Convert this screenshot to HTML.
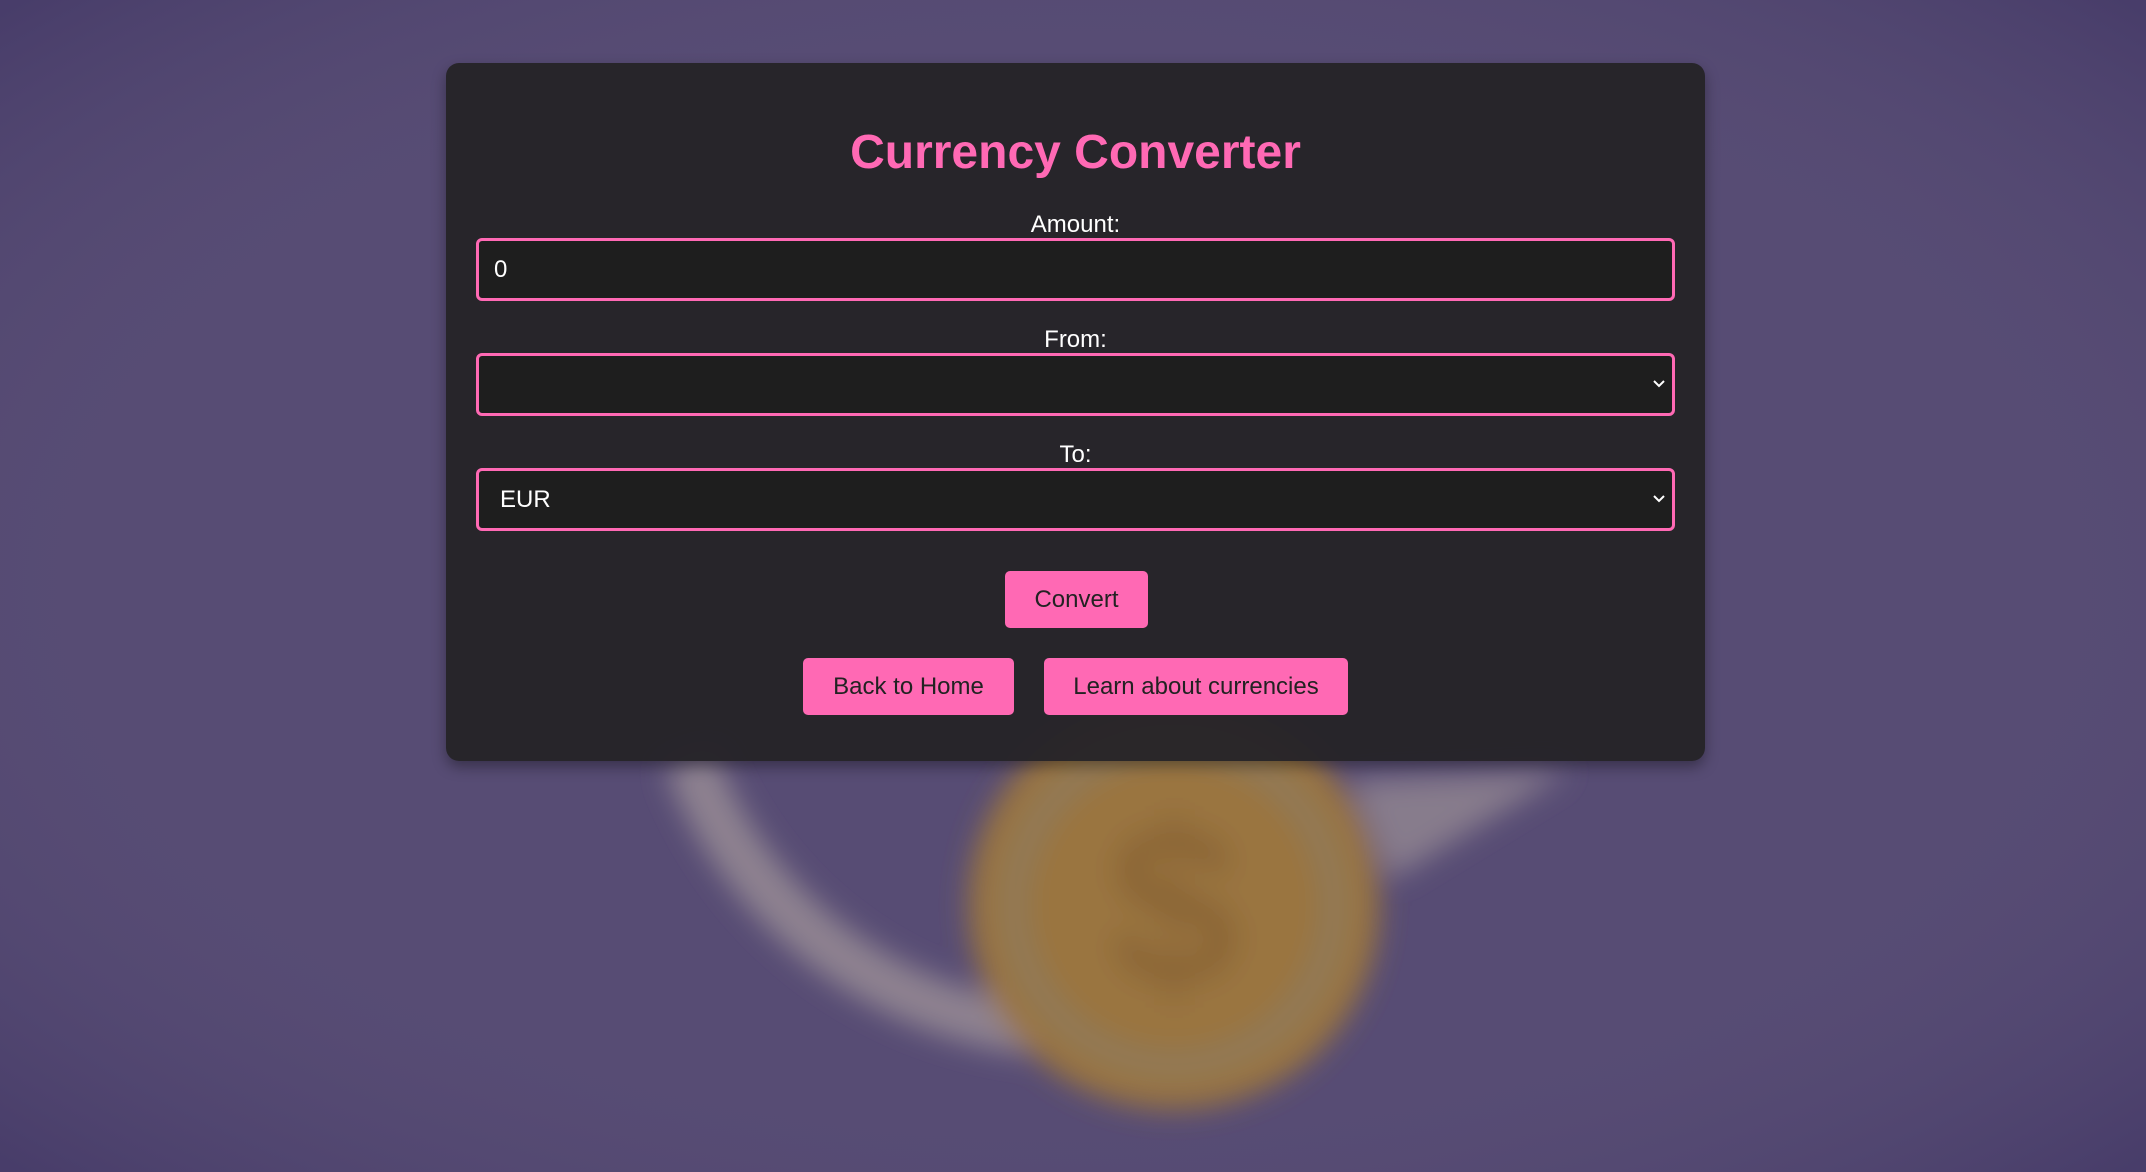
<!DOCTYPE html>
<html><head><meta charset="utf-8"><style>
html,body{margin:0;padding:0;width:2146px;height:1172px;overflow:hidden;background:#564a74;font-family:"Liberation Sans",Arial,sans-serif;}
.bg{position:absolute;left:0;top:0;width:2146px;height:1172px;}
.card{position:absolute;left:446px;top:63px;width:1259px;height:698px;background:rgba(37,35,40,0.96);border-radius:13px;box-shadow:0 6px 14px rgba(0,0,0,0.35);box-sizing:border-box;padding:0 30px;}
h1{margin:0;position:absolute;left:0;right:0;top:62px;text-align:center;color:#ff69b4;font-size:48px;font-weight:bold;line-height:56px;}
.lbl{position:absolute;left:0;right:0;text-align:center;color:#fff;font-size:24px;line-height:28px;}
.fld{position:absolute;left:30px;width:1199px;height:63px;box-sizing:border-box;border:3px solid #ff69b4;border-radius:6px;background:#1e1e1e;color:#fff;font-size:24px;line-height:58px;}
.chev{position:absolute;right:6px;top:0;width:14px;height:57px;}
.btn{position:absolute;background:#ff69b4;color:#222;font-size:24px;text-align:center;line-height:57px;height:57px;border-radius:5px;}
</style></head><body>
<svg class="bg" viewBox="0 0 2146 1172">
<defs>
<filter id="b" x="-50%" y="-50%" width="200%" height="200%"><feGaussianBlur stdDeviation="14"/></filter>
<radialGradient id="v" cx="50%" cy="50%" r="70%"><stop offset="60%" stop-color="#5a4f76" stop-opacity="0"/><stop offset="100%" stop-color="#3e3363" stop-opacity="0.6"/></radialGradient>
</defs>
<rect width="2146" height="1172" fill="#574c74"/>
<g filter="url(#b)">
<path d="M690 760 A420 420 0 0 0 1040 1030" fill="none" stroke="#8e8290" stroke-width="52"/>
<path d="M1350 780 L1570 770 L1390 880 Z" fill="#877b8c"/>
<circle cx="1174" cy="905" r="205" fill="#9a7440"/>
<circle cx="1174" cy="905" r="160" fill="none" stroke="#8e7a5c" stroke-width="22"/>
<text x="1174" y="985" font-size="230" text-anchor="middle" fill="#8a6535" font-family="Liberation Sans" font-weight="bold">$</text>
</g>
<rect width="2146" height="1172" fill="url(#v)"/>
</svg>
<div class="card">
<h1>Currency Converter</h1>
<div class="lbl" style="top:148px">Amount:</div>
<div class="fld" style="top:175px;padding-left:15px">0</div>
<div class="lbl" style="top:263px">From:</div>
<div class="fld" style="top:290px"><svg class="chev" viewBox="0 0 14 57"><path d="M2 25 L7 30 L12 25" fill="none" stroke="#fff" stroke-width="2"/></svg></div>
<div class="lbl" style="top:378px">To:</div>
<div class="fld" style="top:405px;padding-left:21px">EUR<svg class="chev" viewBox="0 0 14 57"><path d="M2 25 L7 30 L12 25" fill="none" stroke="#fff" stroke-width="2"/></svg></div>
<div class="btn" style="left:559px;top:508px;width:143px">Convert</div>
<div class="btn" style="left:357px;top:595px;width:211px">Back to Home</div>
<div class="btn" style="left:598px;top:595px;width:304px">Learn about currencies</div>
</div>
</body></html>
